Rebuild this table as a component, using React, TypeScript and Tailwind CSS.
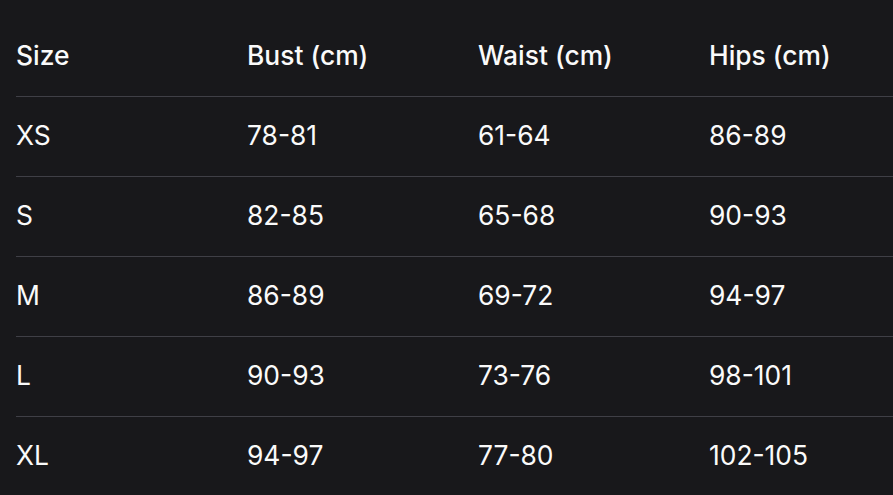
const rows = [
  ["XS", "78-81", "61-64", "86-89"],
  ["S", "82-85", "65-68", "90-93"],
  ["M", "86-89", "69-72", "94-97"],
  ["L", "90-93", "73-76", "98-101"],
  ["XL", "94-97", "77-80", "102-105"],
];

const headers = ["Size", "Bust (cm)", "Waist (cm)", "Hips (cm)"];

export default function App() {
  return (
    <div
      className="min-h-screen w-full overflow-hidden bg-[#18181b] pt-4 pl-4 text-[#fafafa]"
      style={{ fontFamily: "Inter, 'Liberation Sans', sans-serif" }}
    >
      <table className="w-[924px] table-fixed border-collapse text-left text-[26.4px]">
        <thead>
          <tr className="h-20 border-b border-[#3f3f46]">
            {headers.map((h) => (
              <th key={h} className="w-[231px] p-0 font-medium">
                {h}
              </th>
            ))}
          </tr>
        </thead>
        <tbody>
          {rows.map((r) => (
            <tr key={r[0]} className="h-20 border-b border-[#3f3f46]">
              {r.map((c, i) => (
                <td key={i} className="p-0 font-normal">
                  {c}
                </td>
              ))}
            </tr>
          ))}
        </tbody>
      </table>
    </div>
  );
}
